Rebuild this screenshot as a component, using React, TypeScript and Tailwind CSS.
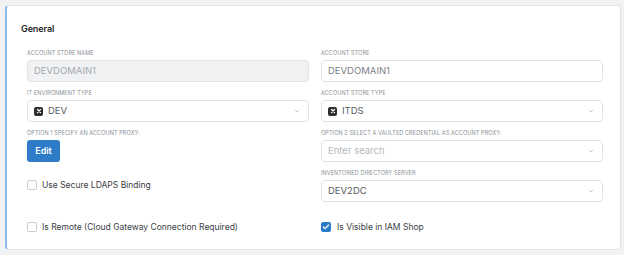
import React from 'react';
import { ChevronDown, Check } from 'lucide-react';

// small dark "x" badge shown before select values
const XBadge = () => (
  <span className="mr-[5px] inline-flex h-[9px] w-[9px] items-center justify-center rounded-[2px] bg-[#2f2f2f]">
    <svg viewBox="0 0 8 8" className="h-[6px] w-[6px]" fill="none" stroke="white" strokeWidth="1.6" strokeLinecap="round">
      <path d="M2 2l4 4M6 2L2 6" />
    </svg>
  </span>
);

const Label = ({ children }: { children: React.ReactNode }) => (
  <div className="mb-[3px] h-[8px] text-[5.5px] leading-[8px] tracking-[0.1px] text-[#8a8f96] uppercase">{children}</div>
);

const SelectBox = ({ children, placeholder }: { children?: React.ReactNode; placeholder?: string }) => (
  <div className="flex h-[22px] items-center justify-between rounded-[4px] border border-[#dfe2e6] bg-white pl-[6px] pr-[7px]">
    <div className="flex items-center text-[9.5px] text-[#555b62]">
      {placeholder ? <span className="text-[#b4b8be]">{placeholder}</span> : children}
    </div>
    <ChevronDown className="h-[8px] w-[8px] text-[#a8adb3]" strokeWidth={2} />
  </div>
);

const CheckRow = ({ label, checked = false }: { label: string; checked?: boolean }) => (
  <div className="flex h-[12px] items-center">
    {checked ? (
      <span className="mr-[6px] flex h-[10px] w-[10px] items-center justify-center rounded-[2px] bg-[#2a7bc6]">
        <Check className="h-[8px] w-[8px] text-white" strokeWidth={3.5} />
      </span>
    ) : (
      <span className="mr-[5px] h-[10px] w-[10px] rounded-[2px] border border-[#c9cdd2] bg-white" />
    )}
    <span className="text-[8.5px] text-[#3a3e44]">{label}</span>
  </div>
);

export default function App() {
  return (
    <div className="h-[255px] w-[624px] bg-[#f1f2f4] pl-[5px] pt-[5px]" style={{ fontFamily: 'Inter, "Open Sans", sans-serif' }}>
      <div className="h-[245px] w-[616px] rounded-[4px] border border-[#e3e5e8] border-l-2 border-l-[#8fbce6] bg-white pl-[14px] pr-[11px] pt-[16px]">
        <div className="mb-[14px] h-[13px] text-[9px] leading-[13px] font-semibold tracking-[-0.1px] text-[#1f1f1f]">General</div>

        <div className="px-[6px]">
          <div className="grid grid-cols-2 gap-x-[12px]">
            <div className="flex flex-col">
              <Label>Account Store Name</Label>
              <div className="flex h-[22px] items-center rounded-[4px] border border-[#e0e3e6] bg-[#f1f2f4] px-[6px] text-[9.5px] text-[#a5a9ae]">DEVDOMAIN1</div>
              <div className="mt-[7px]">
                <Label>IT Environment Type</Label>
                <SelectBox>
                  <XBadge />
                  DEV
                </SelectBox>
              </div>
              <div className="mt-[7px]">
                <Label>Option 1 Specify an Account Proxy:</Label>
                <button className="block h-[22px] w-[33px] rounded-[3px] bg-[#2e7cc7] text-[9px] font-semibold text-white">Edit</button>
              </div>
              <div className="mt-[17px]">
                <CheckRow label="Use Secure LDAPS Binding" />
              </div>
            </div>

            <div className="flex flex-col">
              <Label>Account Store</Label>
              <div className="flex h-[22px] items-center rounded-[4px] border border-[#dfe2e6] bg-white px-[6px] text-[9.5px] text-[#7b8087]">DEVDOMAIN1</div>
              <div className="mt-[7px]">
                <Label>Account Store Type</Label>
                <SelectBox>
                  <XBadge />
                  ITDS
                </SelectBox>
              </div>
              <div className="mt-[7px]">
                <Label>Option 2 Select a Vaulted Credential as Account Proxy:</Label>
                <SelectBox placeholder="Enter search" />
              </div>
              <div className="mt-[7px]">
                <Label>Inventoried Directory Server</Label>
                <SelectBox>DEV2DC</SelectBox>
              </div>
            </div>
          </div>

          <div className="mt-[19px] grid grid-cols-2 gap-x-[12px]">
            <CheckRow label="Is Remote (Cloud Gateway Connection Required)" />
            <CheckRow label="Is Visible in IAM Shop" checked />
          </div>
        </div>
      </div>
    </div>
  );
}
